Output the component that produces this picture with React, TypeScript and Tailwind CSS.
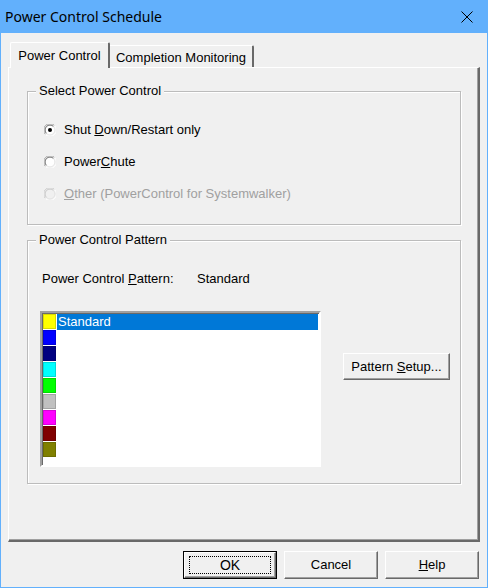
import React from 'react';

const font = { fontFamily: '"Liberation Sans", Arial, sans-serif' };

function Radio({ checked = false, disabled = false }: { checked?: boolean; disabled?: boolean }) {
  return (
    <svg width="12" height="12" viewBox="0 0 12 12" className="shrink-0">
      <circle cx="6" cy="6" r="5.5" fill={disabled ? '#f0f0f0' : '#ffffff'} />
      <path d="M1.5 10.5 A6 6 0 0 1 10.5 1.5" fill="none" stroke={disabled ? '#c8c8c8' : '#a0a0a0'} strokeWidth="1" />
      <path d="M2.5 9.5 A4.8 4.8 0 0 1 9.5 2.5" fill="none" stroke={disabled ? '#c8c8c8' : '#696969'} strokeWidth="1" />
      <path d="M10.5 1.5 A6 6 0 0 1 1.5 10.5" fill="none" stroke="#ffffff" strokeWidth="1" />
      <path d="M9.5 2.5 A4.8 4.8 0 0 1 2.5 9.5" fill="none" stroke="#e3e3e3" strokeWidth="1" />
      {checked && <circle cx="6" cy="6" r="2" fill="#000000" />}
    </svg>
  );
}

function GroupBox({ title, className = '', children }: { title: string; className?: string; children: React.ReactNode }) {
  return (
    <div className={`relative border border-[#bcbcbc] shadow-[inset_1px_1px_0_#fff,1px_1px_0_#fff] ${className}`}>
      <span className="absolute -top-[9px] left-[8px] bg-[#f0f0f0] px-[3px] text-[13px] leading-[16px] text-black">
        {title}
      </span>
      {children}
    </div>
  );
}

function Button({ children, isDefault = false, className = '' }: { children: React.ReactNode; isDefault?: boolean; className?: string }) {
  return (
    <div className={`${isDefault ? 'border border-black' : ''} ${className}`}>
      <div className="flex h-full w-full items-center justify-center border border-t-white border-l-white border-r-[#696969] border-b-[#696969] bg-[#f0f0f0] shadow-[inset_-1px_-1px_0_#a0a0a0] text-[13px] text-black">
        {isDefault ? (
          <div className="flex h-[calc(100%-6px)] w-[calc(100%-8px)] items-center justify-center border border-dotted border-black">
            {children}
          </div>
        ) : (
          children
        )}
      </div>
    </div>
  );
}

const swatches = ['#ffff00', '#0000ff', '#000080', '#00ffff', '#00ff00', '#c0c0c0', '#ff00ff', '#800000', '#808000'];

export default function App() {
  return (
    <div className="flex h-[588px] w-[488px] flex-col border border-t-0 border-[#62b0fc] bg-[#f0f0f0]" style={font}>
      {/* Title bar */}
      <div className="-mx-px flex h-[33px] shrink-0 items-center justify-between bg-[#62b0fc] pl-[5px] pr-[15px]">
        <span className="text-[14px] text-black" style={{ fontFamily: '"Noto Sans", "Open Sans", sans-serif' }}>
          Power Control Schedule
        </span>
        <svg width="12" height="12" viewBox="0 0 12 12">
          <path d="M0.5 0.5 L11.5 11.5 M11.5 0.5 L0.5 11.5" stroke="#000" strokeWidth="1" />
        </svg>
      </div>

      <div className="flex flex-1 flex-col px-[7px] pt-[9px] pb-[8px]">
        {/* Tabs */}
        <div className="flex h-[25px] items-end pl-[2px]">
          <div className="relative z-10 -mb-px flex h-[26px] w-[100px] items-start justify-center rounded-t-[2px] border-t border-l border-t-white border-l-white border-r-2 border-r-[#696969] bg-[#f0f0f0] pt-[3px] text-[13px] text-black">
            Power Control
          </div>
          <div className="flex h-[22px] w-[144px] items-start justify-center rounded-tr-[2px] border-t border-t-white border-r-2 border-r-[#696969] pt-[2px] text-[13px] text-black">
            Completion Monitoring
          </div>
        </div>

        {/* Panel */}
        <div className="flex h-[475px] flex-col border-t border-l border-t-white border-l-white border-r-2 border-b-2 border-r-[#696969] border-b-[#696969] pl-[18px] pr-[17px] pt-[23px] shadow-[inset_-1px_-1px_0_#a0a0a0]">
          <GroupBox title="Select Power Control" className="h-[134px]">
            <div className="flex flex-col gap-[16px] pl-[16px] pt-[30px] text-[13px]">
              <div className="flex h-[16px] items-center gap-[8px] text-black">
                <Radio checked />
                <span>
                  Shut <u>D</u>own/Restart only
                </span>
              </div>
              <div className="flex h-[16px] items-center gap-[8px] text-black">
                <Radio />
                <span>
                  Power<u>C</u>hute
                </span>
              </div>
              <div className="flex h-[16px] items-center gap-[8px] text-[#a0a0a0]">
                <Radio disabled />
                <span>
                  <u>O</u>ther (PowerControl for Systemwalker)
                </span>
              </div>
            </div>
          </GroupBox>

          <GroupBox title="Power Control Pattern" className="mt-[15px] h-[244px]">
            <div className="flex flex-col pl-[12px] pt-[30px] text-[13px] text-black">
              <div className="ml-[2px] flex h-[16px] items-center">
                <span className="w-[155px]">
                  Power Control <u>P</u>attern:
                </span>
                <span>Standard</span>
              </div>

              <div className="mt-[24px] flex items-start">
                {/* List box */}
                <div className="h-[156px] w-[281px] border-2 border-t-[#a0a0a0] border-l-[#a0a0a0] border-r-white border-b-white bg-white shadow-[inset_1px_1px_0_#696969]">
                  <div className="flex flex-col pl-px pt-[1px]">
                    {swatches.map((c, i) => (
                      <div key={c} className="flex h-[16px] items-stretch">
                        <div className="mb-px h-[15px] w-[13px] border border-black/15" style={{ backgroundColor: c }} />
                        {i === 0 && (
                          <div className="ml-[1px] mr-[1px] flex h-[16px] flex-1 items-center bg-[#0078d7] pl-[1px] text-white">
                            Standard
                          </div>
                        )}
                      </div>
                    ))}
                  </div>
                </div>

                <Button className="ml-[22px] mt-[42px] h-[27px] w-[107px]">
                  <span>
                    Pattern <u>S</u>etup...
                  </span>
                </Button>
              </div>
            </div>
          </GroupBox>
        </div>

        {/* Dialog buttons */}
        <div className="mt-[9px] flex justify-end gap-[7px] pr-px">
          <Button isDefault className="h-[28px] w-[94px]">
            <span className="text-[14px]">OK</span>
          </Button>
          <Button className="h-[28px] w-[94px]">
            <span>Cancel</span>
          </Button>
          <Button className="h-[28px] w-[94px]">
            <span>
              <u>H</u>elp
            </span>
          </Button>
        </div>
      </div>
    </div>
  );
}
